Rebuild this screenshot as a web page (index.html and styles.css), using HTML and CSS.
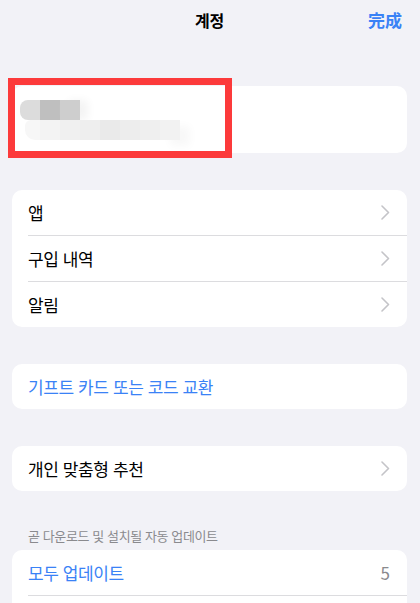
FILE: index.html
```html
<!DOCTYPE html>
<html lang="ko">
<head>
    <meta charset="UTF-8">
    <meta name="viewport" content="width=device-width, initial-scale=1.0">
    <title>계정</title>
    <link rel="stylesheet" href="styles.css">
</head>
<body>

<div class="navbar">
    <div class="nav-title">계정</div>
    <div class="nav-done">完成</div>
</div>

<!-- Profile (blurred) -->
<div class="card profile">
    <div class="blur-line line-1">
        <span class="px p1"></span><span class="px p2"></span><span class="px p3"></span>
    </div>
    <div class="blur-line line-2">
        <span class="px q0"></span><span class="px q1"></span><span class="px q2"></span><span class="px q3"></span><span class="px q4"></span><span class="px q5"></span><span class="px q6"></span><span class="px q7"></span>
    </div>
    <div class="highlight-box"></div>
</div>

<div class="card">
    <div class="row">
        <span class="label">앱</span>
        <svg class="chevron" width="9" height="15" viewBox="0 0 9 15"><path d="M1 1 L7.5 7.5 L1 14" fill="none" stroke="#c4c4c8" stroke-width="1.6" stroke-linecap="round" stroke-linejoin="round"/></svg>
    </div>
    <div class="row">
        <span class="label">구입 내역</span>
        <svg class="chevron" width="9" height="15" viewBox="0 0 9 15"><path d="M1 1 L7.5 7.5 L1 14" fill="none" stroke="#c4c4c8" stroke-width="1.6" stroke-linecap="round" stroke-linejoin="round"/></svg>
    </div>
    <div class="row">
        <span class="label">알림</span>
        <svg class="chevron" width="9" height="15" viewBox="0 0 9 15"><path d="M1 1 L7.5 7.5 L1 14" fill="none" stroke="#c4c4c8" stroke-width="1.6" stroke-linecap="round" stroke-linejoin="round"/></svg>
    </div>
</div>

<div class="card">
    <div class="row">
        <span class="label link">기프트 카드 또는 코드 교환</span>
    </div>
</div>

<div class="card">
    <div class="row">
        <span class="label">개인 맞춤형 추천</span>
        <svg class="chevron" width="9" height="15" viewBox="0 0 9 15"><path d="M1 1 L7.5 7.5 L1 14" fill="none" stroke="#c4c4c8" stroke-width="1.6" stroke-linecap="round" stroke-linejoin="round"/></svg>
    </div>
</div>

<div class="section-header">곧 다운로드 및 설치될 자동 업데이트</div>
<div class="card">
    <div class="row">
        <span class="label link">모두 업데이트</span>
        <span class="count">5</span>
    </div>
    <div class="row"></div>
</div>

</body>
</html>
```

FILE: styles.css
```css
body {
    margin: 0;
    padding: 0 13px 0 12px;
    background-color: #f2f2f7;
    font-family: "Noto Sans CJK KR", "Noto Sans", sans-serif;
    color: #000;
    overflow: hidden;
}
.navbar {
    height: 40px;
    display: flex;
    align-items: center;
    justify-content: center;
    position: relative;
}
.nav-title {
    font-size: 16px;
    font-weight: 600;
    letter-spacing: -0.3px;
}
.nav-done {
    position: absolute;
    right: 5px;
    top: 7px;
    font-size: 17px;
    font-weight: 700;
    color: #3a82f6;
    font-family: "Noto Sans CJK SC", sans-serif;
}
.card {
    background: #fff;
    border-radius: 10px;
    margin-bottom: 37px;
}
.profile {
    margin-top: 46px;
    height: 67px;
    position: relative;
    padding: 14px 0 0 8px;
    box-sizing: border-box;
}
.blur-line {
    display: flex;
    height: 20px;
}
.line-2 {
    padding-left: 5px;
}
.px {
    width: 20px;
    height: 20px;
}
.p1 { background: #dcdcdc; border-radius: 8px 0 0 8px; }
.p2 { background: #bfbfbf; }
.p3 { background: #cecece; box-shadow: 8px 0 8px #f4f4f4; }
.q0 { width: 15px; background: #f7f7f7; border-radius: 6px 0 0 10px; }
.q1 { background: #f3f3f3; }
.q2 { background: #f0f0f0; }
.q3 { background: #eeeeee; }
.q4 { background: #eaeaea; }
.q5 { background: #ededed; }
.q6 { background: #efefef; }
.q7 { background: #f2f2f2; box-shadow: 10px 6px 8px #f8f8f8; }
.highlight-box {
    position: absolute;
    left: -4px;
    top: -8px;
    width: 224px;
    height: 80px;
    box-sizing: border-box;
    border: 7px solid #fc3a3b;
}
.row {
    height: 45px;
    margin-left: 16px;
    padding-right: 17px;
    display: flex;
    align-items: center;
    justify-content: space-between;
    border-bottom: 1px solid #dcdcdf;
}
.row:last-child {
    border-bottom: none;
}
.label {
    font-size: 17px;
    letter-spacing: -0.4px;
}
.link {
    color: #3a82f6;
}
.chevron {
    display: block;
}
.count {
    font-size: 17px;
    color: #8a8a8e;
}
.section-header {
    margin: 0 0 6px 16px;
    font-size: 13px;
    line-height: 16px;
    color: #8a8a8e;
    letter-spacing: -0.4px;
}
```
